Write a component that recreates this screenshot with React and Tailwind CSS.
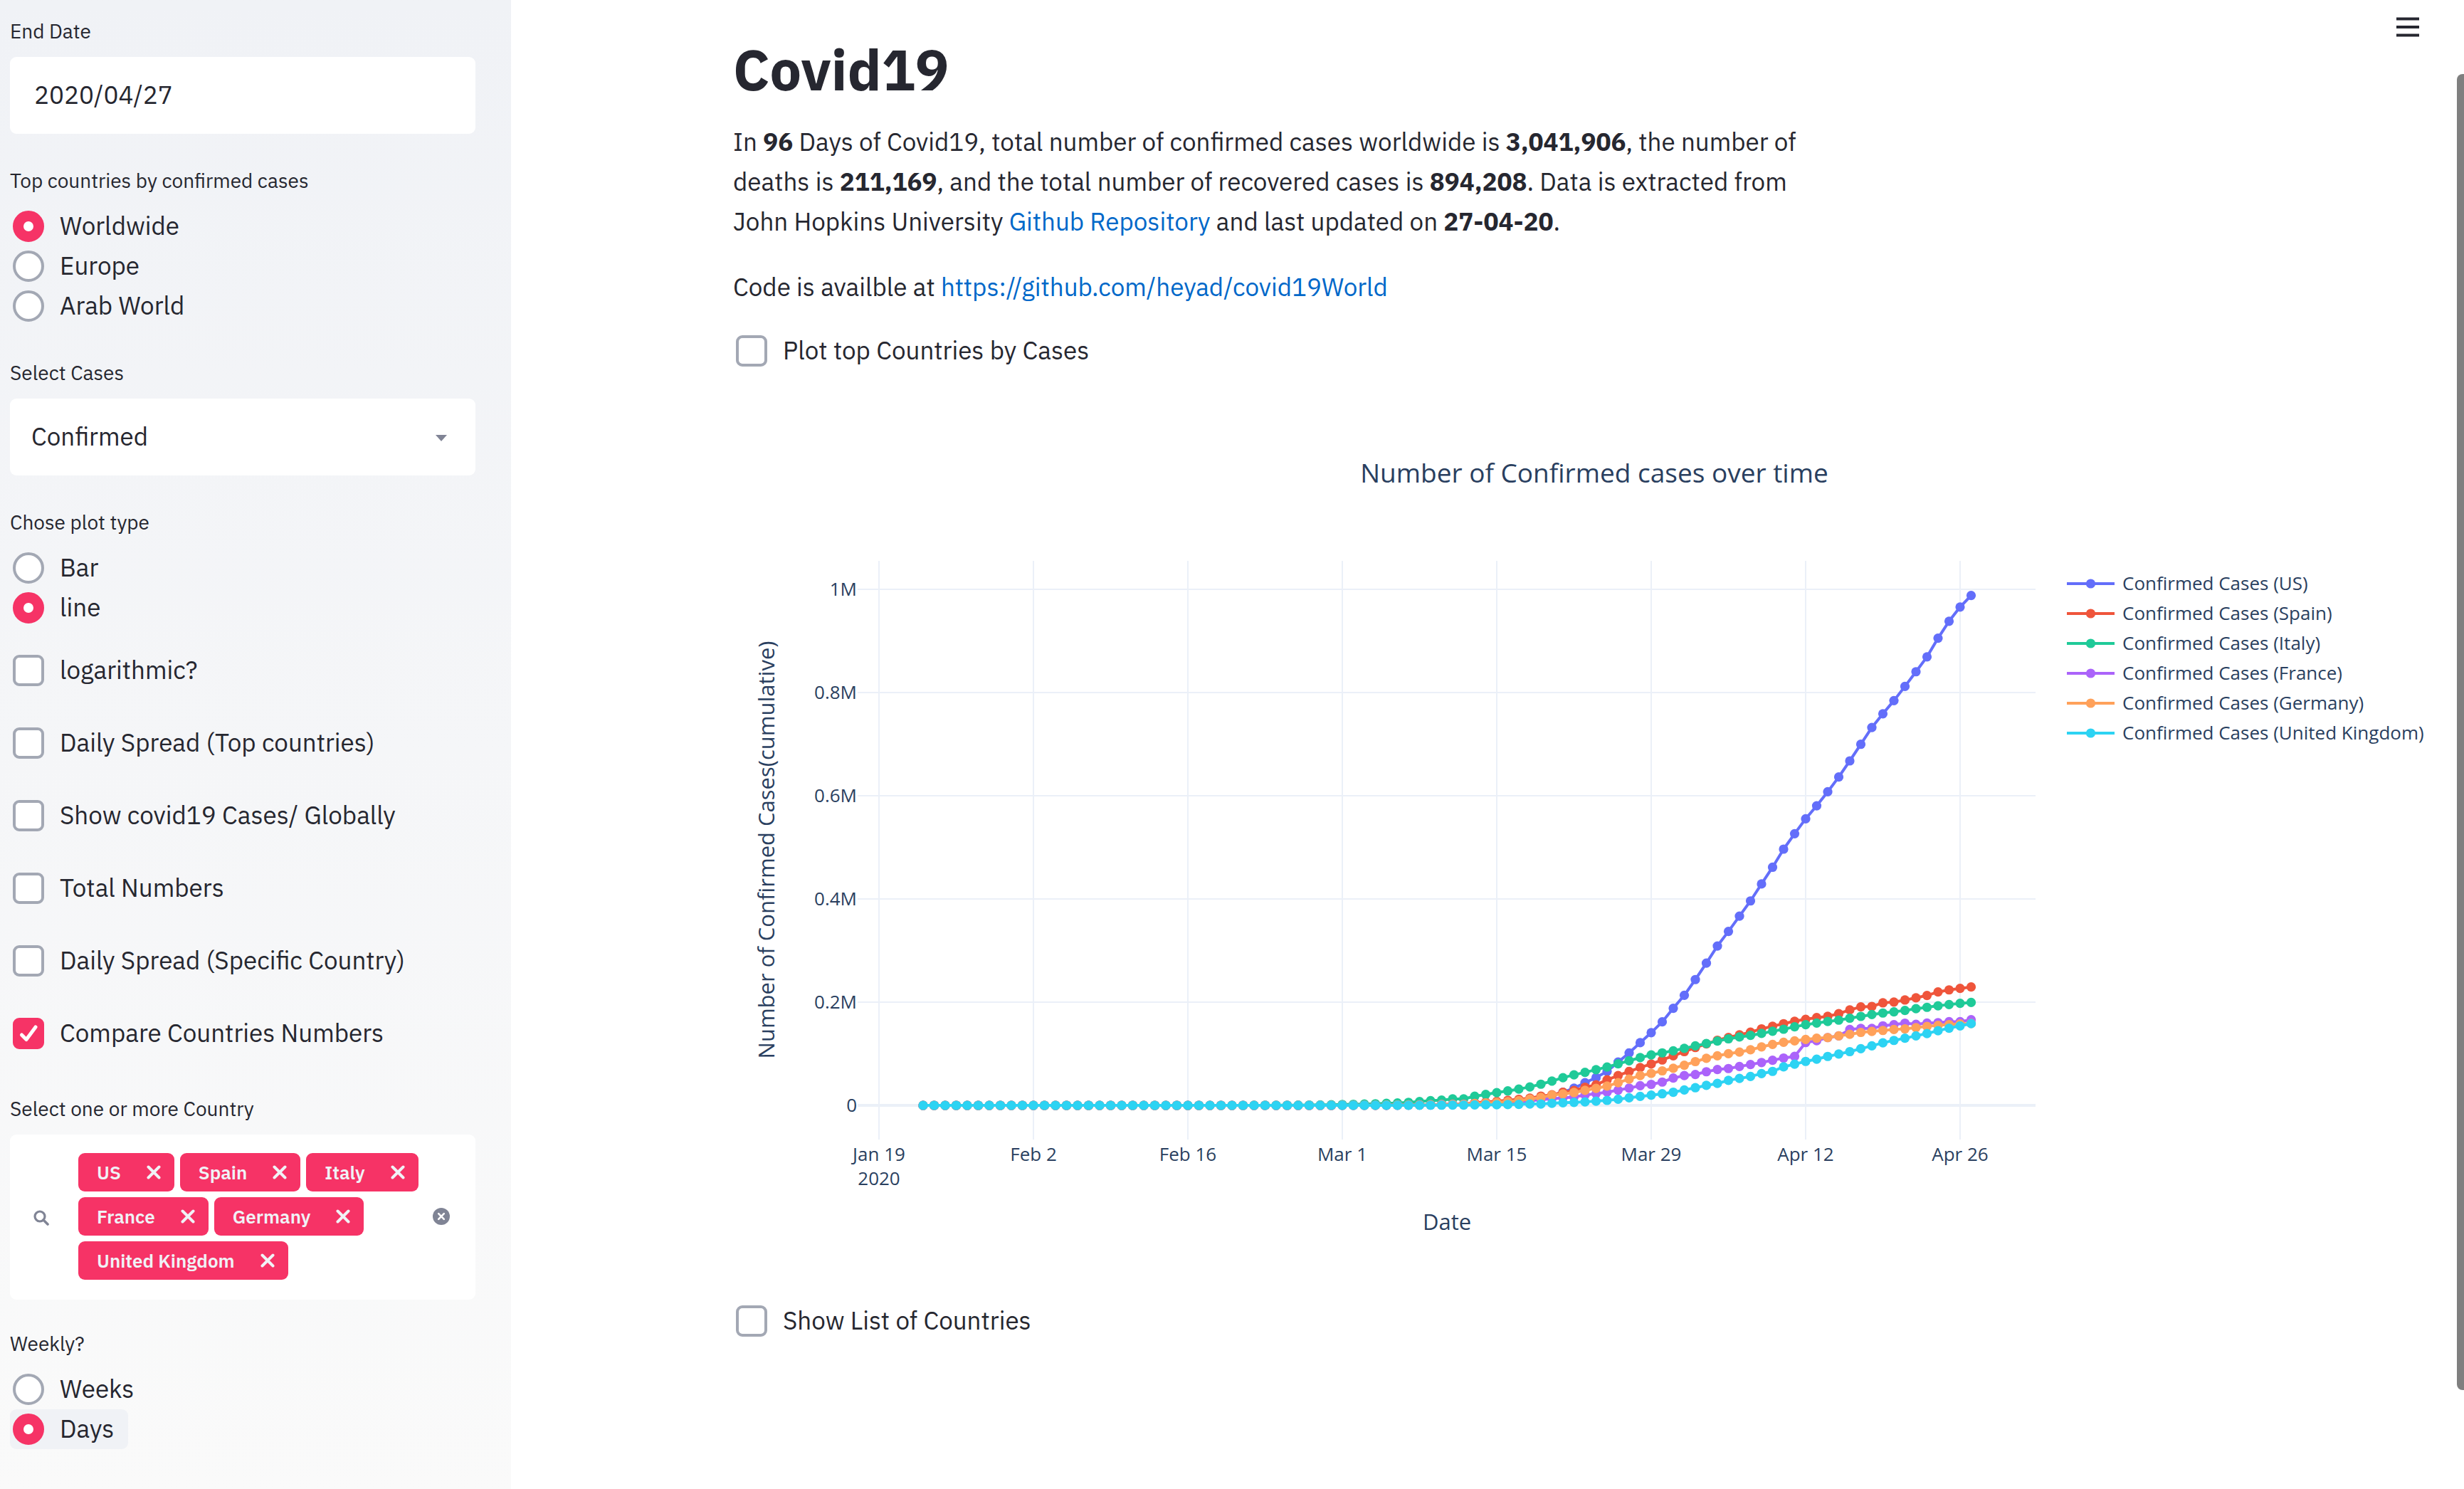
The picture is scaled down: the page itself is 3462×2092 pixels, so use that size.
import React, { useState } from "react";

const sans = "font-['IBM_Plex_Sans','Roboto',sans-serif]";

/* ---------- form controls ---------- */

function FieldLabel({ htmlFor, children }) {
  return (
    <label htmlFor={htmlFor} className="mb-[14px] block text-[28px] leading-[44px]">
      {children}
    </label>
  );
}

function Checkbox({ label, checked: initial = false }) {
  const [checked, setChecked] = useState(initial);
  return (
    <label className="flex h-14 w-fit items-center gap-[22px] pl-1 text-[35px] leading-[52px]">
      <span className="grid size-11 shrink-0 place-items-center">
        <input
          type="checkbox"
          checked={checked}
          onChange={(e) => setChecked(e.target.checked)}
          className="col-start-1 row-start-1 size-11 appearance-none rounded-[9px] border-4 border-[#a3a8b4] bg-white checked:border-[#f63366] checked:bg-[#f63366]"
        />
        {checked && (
          <svg viewBox="0 0 44 44" className="pointer-events-none col-start-1 row-start-1 size-11">
            <path d="M12.5 24 L19 30.5 L32 13" fill="none" stroke="#fff" strokeWidth="5" strokeLinecap="round" strokeLinejoin="round" />
          </svg>
        )}
      </span>
      <span className="pb-[3px]">{label}</span>
    </label>
  );
}

function RadioGroup({ name, legend, options, value: initial, highlight }) {
  const [value, setValue] = useState(initial);
  return (
    <fieldset>
      <legend className="mb-[14px] block text-[28px] leading-[44px]">{legend}</legend>
      {options.map((option) => (
        <label
          key={option}
          className={`flex h-14 w-fit items-center gap-[22px] rounded-[9px] pl-1 pr-5 text-[35px] leading-[52px] ${
            option === highlight ? "bg-[#f0f2f6]" : ""
          }`}
        >
          <input
            type="radio"
            name={name}
            checked={value === option}
            onChange={() => setValue(option)}
            className="size-11 shrink-0 appearance-none rounded-full border-4 border-[#a3a8b4] bg-white checked:border-[15px] checked:border-[#f63366]"
          />
          <span className="pb-[3px]">{option}</span>
        </label>
      ))}
    </fieldset>
  );
}

function Tag({ children }) {
  return (
    <span className="flex h-[54px] items-center gap-9 rounded-[9px] bg-[#f63366] pl-[26px] pr-[19px] text-[26px] font-semibold text-[#f0f2f6]">
      {children}
      <button type="button" aria-label={`Remove ${children}`}>
        <svg viewBox="0 0 20 20" className="size-5">
          <path d="M2.5 2.5 L17.5 17.5 M17.5 2.5 L2.5 17.5" stroke="#f0f2f6" strokeWidth="4" strokeLinecap="round" />
        </svg>
      </button>
    </span>
  );
}

function Sidebar() {
  return (
    <aside className="w-[718px] shrink-0 bg-linear-to-b from-[#f0f2f6] to-[#fafafa] pt-[22px] pr-[50px] pb-[54px] pl-[14px]">
      <FieldLabel htmlFor="end-date">End Date</FieldLabel>
      <input
        id="end-date"
        type="text"
        defaultValue="2020/04/27"
        className="block h-[108px] w-full rounded-[9px] bg-white px-[34px] pb-[2px] text-[35px]"
      />

      <div className="mt-11">
        <RadioGroup
          name="region"
          legend="Top countries by confirmed cases"
          options={["Worldwide", "Europe", "Arab World"]}
          value="Worldwide"
        />
      </div>

      <div className="mt-11">
        <FieldLabel htmlFor="cases">Select Cases</FieldLabel>
        <div className="relative">
          <select id="cases" className="block h-[108px] w-full appearance-none rounded-[9px] bg-white px-[30px] pb-[2px] text-[35px]">
            <option>Confirmed</option>
            <option>Deaths</option>
            <option>Recovered</option>
          </select>
          <svg viewBox="0 0 16 9" className="pointer-events-none absolute top-[51px] right-10 h-[9px] w-4">
            <path d="M0 0 H16 L8 9 Z" fill="#808495" />
          </svg>
        </div>
      </div>

      <div className="mt-11">
        <RadioGroup name="plot-type" legend="Chose plot type" options={["Bar", "line"]} value="line" />
      </div>

      <div className="mt-8 flex flex-col gap-[46px]">
        <Checkbox label="logarithmic?" />
        <Checkbox label="Daily Spread (Top countries)" />
        <Checkbox label="Show covid19 Cases/ Globally" />
        <Checkbox label="Total Numbers" />
        <Checkbox label="Daily Spread (Specific Country)" />
        <Checkbox label="Compare Countries Numbers" checked />
      </div>

      <div className="mt-14">
        <FieldLabel htmlFor="country-search">Select one or more Country</FieldLabel>
        <div className="flex items-center rounded-[9px] bg-white pt-[26px] pr-9 pb-7 pl-[33px]">
          <svg viewBox="0 0 22 22" className="mt-1 size-[22px] shrink-0">
            <circle cx="9" cy="9" r="7" fill="none" stroke="#808495" strokeWidth="3.2" />
            <path d="M14 14 L20 20" stroke="#808495" strokeWidth="3.6" strokeLinecap="round" />
          </svg>
          <div className="ml-[41px] flex grow flex-wrap gap-2">
            <Tag>US</Tag>
            <Tag>Spain</Tag>
            <Tag>Italy</Tag>
            <Tag>France</Tag>
            <Tag>Germany</Tag>
            <Tag>United Kingdom</Tag>
            <input id="country-search" type="text" className="h-[54px] w-0 grow bg-transparent text-[26px] outline-none" />
          </div>
          <button type="button" aria-label="Clear all">
            <svg viewBox="0 0 24 24" className="size-6">
              <circle cx="12" cy="12" r="12" fill="#808495" />
              <path d="M8.2 8.2 L15.8 15.8 M15.8 8.2 L8.2 15.8" stroke="#fff" strokeWidth="2.6" strokeLinecap="round" />
            </svg>
          </button>
        </div>
      </div>

      <div className="mt-10">
        <RadioGroup name="weekly" legend="Weekly?" options={["Weeks", "Days"]} value="Days" highlight="Days" />
      </div>
    </aside>
  );
}

/* ---------- chart ---------- */

// Cumulative confirmed cases per day; every series ends on 27 April 2020.
const series = [
  {
    name: "US",
    color: "#636efa",
    values: [
      74, 98, 118, 149, 217, 262, 402, 518, 583, 959, 1281, 1663, 2179, 2727, 3499, 4632, 6421, 7783, 13677, 19100,
      25489, 33276, 43847, 53740, 65778, 83836, 101657, 121465, 140909, 161831, 188172, 213372, 243762, 275586, 308853,
      337072, 366667, 396223, 429052, 461437, 496535, 526396, 555313, 580619, 607670, 636350, 667592, 699706, 732197,
      758809, 784326, 811865, 840351, 869170, 905358, 938154, 965785, 988197,
    ],
  },
  {
    name: "Spain",
    color: "#ef553b",
    values: [
      84, 120, 165, 222, 259, 400, 500, 673, 1073, 1695, 2277, 2277, 5232, 6391, 7798, 9942, 11748, 13910, 17963, 20410,
      25374, 28768, 35136, 39885, 49515, 57786, 65719, 73235, 80110, 87956, 95923, 104118, 112065, 119199, 126168,
      131646, 136675, 141942, 148220, 153222, 158273, 163027, 166831, 170099, 172541, 177644, 184948, 190839, 191726,
      198674, 200210, 204178, 208389, 213024, 219764, 223759, 226629, 229422,
    ],
  },
  {
    name: "Italy",
    color: "#1fca98",
    values: [
      20, 62, 155, 229, 322, 453, 655, 888, 1128, 1694, 2036, 2502, 3089, 3858, 4636, 5883, 7375, 9172, 10149, 12462,
      12462, 17660, 21157, 24747, 27980, 31506, 35713, 41035, 47021, 53578, 59138, 63927, 69176, 74386, 80589, 86498,
      92472, 97689, 101739, 105792, 110574, 115242, 119827, 124632, 128948, 132547, 135586, 139422, 143626, 147577,
      152271, 156363, 159516, 162488, 165155, 168941, 172434, 175925, 178972, 181228, 183957, 187327, 189973, 192994,
      195351, 197675, 199414,
    ],
  },
  {
    name: "France",
    color: "#ab63fa",
    values: [
      130, 191, 204, 288, 380, 656, 959, 1136, 1219, 1794, 2293, 2293, 3681, 4496, 4532, 6683, 7715, 9124, 10970, 12758,
      14463, 16243, 20123, 22622, 25600, 29551, 33402, 38105, 40708, 45170, 52827, 57749, 59929, 65202, 69500, 71412,
      75343, 79163, 83057, 87366, 91738, 94863, 121712, 125394, 131361, 134582, 147091, 149130, 149149, 154098, 156493,
      159297, 157135, 159460, 160292, 162220, 162220, 165964,
    ],
  },
  {
    name: "Germany",
    color: "#ffa15a",
    values: [
      130, 159, 196, 262, 482, 670, 799, 1040, 1176, 1457, 1908, 2078, 3675, 4585, 5795, 7272, 9257, 12327, 15320,
      19848, 22213, 24873, 29056, 32986, 37323, 43938, 50871, 57695, 62095, 66885, 71808, 77872, 84794, 91159, 96092,
      100123, 103374, 107663, 113296, 118181, 122171, 124908, 127854, 130072, 131359, 134753, 137698, 141397, 143342,
      145184, 147065, 148291, 150648, 153129, 154999, 156513, 157770, 158758,
    ],
  },
  {
    name: "United Kingdom",
    color: "#2dd3f3",
    values: [
      36, 40, 51, 86, 116, 164, 207, 274, 322, 384, 459, 459, 802, 1144, 1145, 1551, 1960, 2642, 2716, 4014, 5067, 5745,
      6726, 8164, 9640, 11812, 14745, 17312, 19780, 22453, 25481, 29865, 34173, 38689, 42479, 48436, 52279, 55949,
      61474, 65872, 74605, 79874, 85206, 89570, 94845, 99483, 104145, 109769, 115314, 121172, 125856, 130172, 134638,
      139246, 144640, 149569, 154037, 158348,
    ],
  },
];

const DAYS = 96;
const xTicks = ["Jan 19", "Feb 2", "Feb 16", "Mar 1", "Mar 15", "Mar 29", "Apr 12", "Apr 26"];
const yTicks = ["0", "0.2M", "0.4M", "0.6M", "0.8M", "1M"];
const dayX = (day) => 267 + day * 15.5;
const caseY = (n) => 1001 - (n / 1000000) * 725;

function Chart() {
  return (
    <svg viewBox="0 0 2420 1248" className="block h-auto w-full font-['Open_Sans',sans-serif]" fill="#2a3f5f" role="img" aria-label="Number of Confirmed cases over time">
      <text x="1210" y="126" textAnchor="middle" fontSize="37">
        Number of Confirmed cases over time
      </text>

      {xTicks.map((tick, i) => (
        <g key={tick}>
          <path d={`M${205 + i * 217} 236 V1049`} stroke="#ebf0f8" strokeWidth="2" />
          <text x={205 + i * 217} y="1079" textAnchor="middle" fontSize="26">
            {tick}
          </text>
        </g>
      ))}
      <text x="205" y="1113" textAnchor="middle" fontSize="26">
        2020
      </text>
      {yTicks.map((tick, i) => (
        <g key={tick}>
          <path d={`M175 ${1001 - i * 145} H1830`} stroke="#ebf0f8" strokeWidth={i === 0 ? 4 : 2} />
          <text x="174" y={1010 - i * 145} textAnchor="end" fontSize="26">
            {tick}
          </text>
        </g>
      ))}

      <text x="1003" y="1176" textAnchor="middle" fontSize="31">
        Date
      </text>
      <text transform="translate(58 642) rotate(-90)" textAnchor="middle" fontSize="31">
        Number of Confirmed Cases(cumulative)
      </text>

      {series.map(({ name, color, values }) => {
        const padded = [...Array(DAYS - values.length).fill(0), ...values];
        const points = padded.map((v, i) => [dayX(i), caseY(v)]);
        return (
          <g key={name}>
            <polyline points={points.map((p) => p.join(",")).join(" ")} fill="none" stroke={color} strokeWidth="4" strokeLinejoin="round" />
            {points.map(([x, y]) => (
              <circle key={x} cx={x} cy={y} r="6.6" fill={color} />
            ))}
          </g>
        );
      })}

      {series.map(({ name, color }, i) => (
        <g key={name}>
          <path d={`M1874 ${268 + i * 42} H1941`} stroke={color} strokeWidth="4" />
          <circle cx="1907.5" cy={268 + i * 42} r="6.6" fill={color} />
          <text x="1952" y={277 + i * 42} fontSize="26">
            Confirmed Cases ({name})
          </text>
        </g>
      ))}
    </svg>
  );
}

/* ---------- page ---------- */

export default function App() {
  return (
    <div className={`flex min-h-screen bg-white text-[#262730] ${sans}`}>
      <Sidebar />
      <main className="relative min-w-0 grow pt-[50px] pr-3 pl-[312px]">
        <div className="max-w-[1540px]">
          <h1 className="text-[79px] leading-[96px] font-bold">Covid19</h1>
          <p className="mt-[25px] text-[35px] leading-[56px]">
            In <strong>96</strong> Days of Covid19, total number of confirmed cases worldwide is <strong>3,041,906</strong>, the number of
            deaths is <strong>211,169</strong>, and the total number of recovered cases is <strong>894,208</strong>. Data is extracted from
            John Hopkins University{" "}
            <a href="https://github.com/CSSEGISandData/COVID-19" className="text-[#0068c9]">
              Github Repository
            </a>{" "}
            and last updated on <strong>27-04-20</strong>.
          </p>
          <p className="mt-9 text-[35px] leading-[56px]">
            Code is availble at{" "}
            <a href="https://github.com/heyad/covid19World" className="text-[#0068c9]">
              https://github.com/heyad/covid19World
            </a>
          </p>
        </div>
        <div className="mt-[34px]">
          <Checkbox label="Plot top Countries by Cases" />
        </div>
        <div className="mt-[31px]">
          <Chart />
        </div>
        <div className="mt-7">
          <Checkbox label="Show List of Countries" />
        </div>

        <button type="button" aria-label="Menu" className="absolute top-6 right-[63px]">
          <svg viewBox="0 0 32 28" className="h-7 w-8">
            <path d="M0 2.5 H32 M0 14 H32 M0 25.5 H32" stroke="#262730" strokeWidth="4" />
          </svg>
        </button>
        <div className="absolute top-[104px] right-0 h-[1849px] w-[10px] rounded-l-[8px] bg-[#7f7f7f]" />
      </main>
    </div>
  );
}
